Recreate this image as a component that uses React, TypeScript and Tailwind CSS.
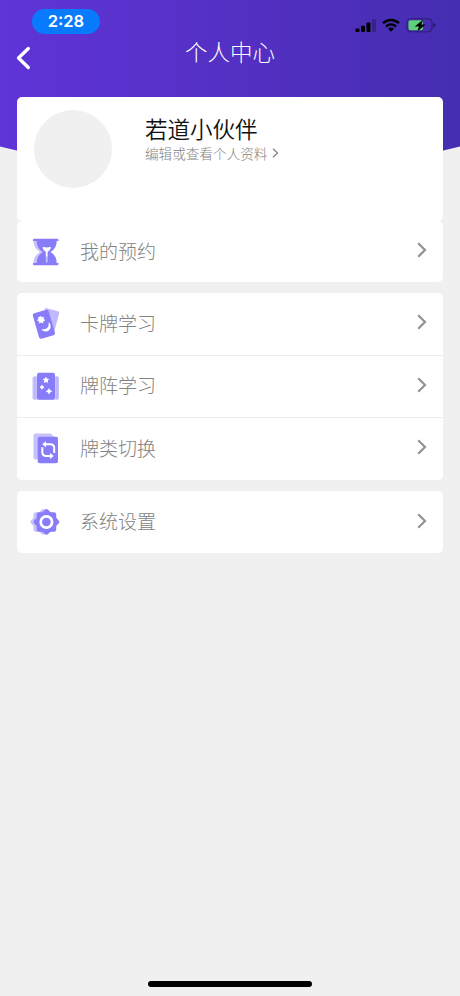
import React from 'react';

interface RowProps {
  icon: React.ReactNode;
  label: string;
}

const Arrow: React.FC = () => (
  <svg className="mb-[2px] h-[16px] w-[10px]" viewBox="0 0 10 16" fill="none" stroke="#929292" strokeWidth="2.2">
    <path d="M1.200 1.200 8 8l-6.800 6.800" />
  </svg>
);

const Row: React.FC<RowProps> = ({ icon, label }) => (
  <div className="flex h-full items-center pr-[16px] pb-px pl-[12px]">
    <div className="h-[34px] w-[34px] shrink-0">{icon}</div>
    <span className="mb-px ml-[17px] flex-1 text-[19px] leading-[28px] font-light text-[#828282]">{label}</span>
    <Arrow />
  </div>
);

const HourglassIcon = () => (
  <svg className="h-full w-full" viewBox="0 0 34 34">
    <path d="M4.500 6.500h12v23h-12c0-5.500 2-8.500 6.500-11.500-4.500-3-6.500-6-6.500-11.500z" fill="#c9c4fc" />
    <path d="M5 4.700h23.500a1 1 0 0 1 1 1V7h-1.800c0 5.200-2.300 8.500-6.200 11 3.900 2.500 6.200 5.800 6.200 11h1.800v1.300a1 1 0 0 1-1 1H5a1 1 0 0 1-1-1V29h3.700c0-5.200 2.300-8.500 6.200-11C10 15.500 7.700 12.200 7.700 7H4V5.700a1 1 0 0 1 1-1z" fill="#897cf8" />
    <path d="M13.500 13.200c1.300-.7 2.700.3 4.200.3s2.900-1 4.200-.3c-.3 2.300-1.700 3.500-3.300 4.500v5.300h-1.800v-5.300c-1.600-1-3-2.200-3.300-4.500z" fill="#fff" />
    <path d="M17.700 22v6.500" stroke="#c9c4fc" strokeWidth="1.700" />
  </svg>
);

const CardsIcon = () => (
  <svg className="h-full w-full" viewBox="0 0 34 34">
    <rect x="13" y="3.500" width="15" height="22" rx="1.5" transform="rotate(15 21 14.500)" fill="#c0bafc" />
    <rect x="6.700" y="5" width="16.500" height="26.500" rx="2" transform="rotate(-16 15 18.500)" fill="#897cf8" />
    <path d="m11.700 10 1.200 1.500 1.900-.3-.3 1.900 1.500 1.200-1.800.8-.3 2-1.700-.8-1.800.9-.3-2-1.800-1 1.400-1.300-.3-1.900 1.900.3z" fill="#fff" stroke="#fff" strokeWidth=".5" />
    <path d="M19.500 16c4 3.200 2.200 9.500-2.700 9.500-2 0-3.500-1-4.200-2.300 4.900 1 8-2.500 6.900-7.200z" fill="#fff" />
  </svg>
);

const SpreadIcon = () => (
  <svg className="h-full w-full" viewBox="0 0 34 34">
    <rect x="3.500" y="7.500" width="26.500" height="23" rx="1.5" fill="#c7c2fc" />
    <path d="M6 7.500v23M28 7.500v23" stroke="#b4adfb" strokeWidth="1" />
    <rect x="8" y="3.700" width="18" height="27" rx="2" fill="#897cf8" />
    <path d="m17 8.500.9 1.500 1.700.3-1.200 1.300.2 1.700-1.600-.7-1.600.7.2-1.700-1.200-1.300 1.700-.3z" fill="#fff" stroke="#fff" strokeWidth=".9" />
    <path d="m13 16.200.7 1.200 1.300.8-1.300.8-.7 1.200-.7-1.200-1.300-.8 1.300-.8z" fill="#fff" stroke="#fff" strokeWidth=".9" />
    <path d="m20 20.200.7 1.300 1.400.7-1.400.8-.7 1.300-.7-1.300-1.400-.8 1.400-.7z" fill="#fff" stroke="#fff" strokeWidth="1.200" />
  </svg>
);

const SwitchIcon = () => (
  <svg className="h-full w-full" viewBox="0 0 34 34">
    <path d="M6.200 2.500h15.500l3 3v23H6.200a1.800 1.800 0 0 1-1.700-2v-22a1.800 1.800 0 0 1 1.700-2z" fill="#c7c2fc" />
    <rect x="8.700" y="5.700" width="20.300" height="26.500" rx="2" fill="#897cf8" />
    <g fill="none" stroke="#fff" strokeWidth="2">
      <path d="M15.500 13.300h5.700c2.300 0 4 1.500 4 3.700v5" />
      <path d="M22.500 25h-5.200c-2.500 0-4-1.500-4-3.700v-5" />
    </g>
    <path d="m17 10.300-3.800 3 3.800 3zM21 22v6l3.800-3z" fill="#fff" />
  </svg>
);

const GearIcon = () => (
  <svg className="h-full w-full" viewBox="0 0 34 34">
    <g fill="#c7c2fc">
      <rect x="4.500" y="7.200" width="19.500" height="19.500" rx="2.300" />
      <rect x="4.500" y="7.200" width="19.500" height="19.500" rx="2.300" transform="rotate(45 14.250 16.950)" />
    </g>
    <g fill="#897cf8">
      <rect x="7.700" y="7.200" width="19.500" height="19.500" rx="2.300" />
      <rect x="7.700" y="7.200" width="19.500" height="19.500" rx="2.300" transform="rotate(45 17.450 16.950)" />
    </g>
    <circle cx="17.400" cy="17" r="5.700" fill="none" stroke="#fff" strokeWidth="2.700" />
  </svg>
);

const StatusIcons = () => (
  <svg className="h-[16px] w-[82px]" viewBox="0 0 82 16">
    <rect x="1.500" y="10.500" width="4" height="3.500" rx="1" />
    <rect x="7" y="7.800" width="4" height="6.200" rx="1" />
    <rect x="12.500" y="4.500" width="4" height="9.500" rx="1" />
    <rect x="18" y="1" width="4" height="13" rx="1" opacity=".25" />
    <g fill="none" stroke="#000" strokeWidth="2.500">
      <path d="M29 5.200c4.700-4.300 11.300-4.300 16 0" />
      <path d="M32 8.500c3-2.700 7-2.700 10 0" />
    </g>
    <path d="M34 10.700c1.800-1.500 4.200-1.500 6 0l-3 3.100z" />
    <rect x="53" y=".8" width="25" height="13" rx="3.500" fill="none" stroke="#000" opacity=".4" />
    <rect x="54.500" y="2.300" width="14.500" height="10" rx="2" fill="#5fd07a" />
    <path d="M79.200 5v4.600c1.500-.6 2.200-1.300 2.200-2.300s-.7-1.700-2.200-2.300z" opacity=".4" />
    <path d="m69 1.700-8.300 6.800h4.200l-1.500 5 8-7h-4z" />
  </svg>
);

const studyRows: RowProps[] = [
  { icon: <CardsIcon />, label: '卡牌学习' },
  { icon: <SpreadIcon />, label: '牌阵学习' },
  { icon: <SwitchIcon />, label: '牌类切换' },
];

export default function App() {
  return (
    <div className="relative flex h-[996px] w-[460px] flex-col overflow-hidden bg-[#f0f0f0] font-['Noto_Sans_CJK_SC',sans-serif]">
      {/* Curved header backdrop, lies under the profile card */}
      <div className="absolute inset-x-0 top-0 h-[172px] overflow-hidden">
        <div className="absolute -left-[115px] bottom-0 h-[400px] w-[690px] rounded-b-[50%_100px] bg-linear-to-r from-[#6034d8] from-[16%] via-[#5430c4] via-[50%] to-[#452db0] to-[84%]" />
      </div>

      <header className="relative h-[97px]">
        <div className="flex h-[34px] items-end justify-between pr-[24px] pl-[32px]">
          <div className="h-[25px] w-[68px] rounded-full bg-[#087bfc] text-center font-['Inter',sans-serif] text-[16.5px] leading-[25px] font-semibold text-white">
            2:28
          </div>
          <StatusIcons />
        </div>
        <div className="grid h-[34px] grid-cols-[60px_1fr_60px] items-center">
          <svg className="mt-[12px] ml-[16px] h-[24px] w-[15px]" viewBox="0 0 15 24" fill="none" stroke="#fff" strokeWidth="3.300" strokeLinecap="round" strokeLinejoin="round">
            <path d="M12.300 2.500 2.500 12l9.800 9.500" />
          </svg>
          <h1 className="mb-px text-center text-[22.5px] leading-[31px] font-light text-white">个人中心</h1>
        </div>
      </header>

      <main className="relative flex flex-col px-[17px]">
        <section className="flex h-[124px] rounded-[5px] bg-white pt-[13px] pl-[17px]">
          <div className="h-[78px] w-[78px] rounded-full bg-[#f0f0f0]" />
          <div className="ml-[33px] pt-[2px]">
            <h2 className="text-[22.5px] leading-[32px] font-[350] text-[#111]">若道小伙伴</h2>
            <p className="flex items-center text-[13.6px] leading-[18px] font-light text-[#828282]">
              编辑或查看个人资料
              <svg className="ml-[5px] h-[10px] w-[7px]" viewBox="0 0 7 10" fill="none" stroke="#858585" strokeWidth="1.300">
                <path d="m1 .8 4.500 4.200L1 9.200" />
              </svg>
            </p>
          </div>
        </section>

        <section className="h-[61px] rounded-[5px] bg-white">
          <Row icon={<HourglassIcon />} label="我的预约" />
        </section>

        <section className="mt-[11px] rounded-[5px] bg-white">
          {studyRows.map((row, i) => (
            <div key={row.label} className={i > 0 ? 'h-[62.500px] border-t border-[#ededed]' : 'h-[61.500px]'}>
              <Row {...row} />
            </div>
          ))}
        </section>

        <section className="mt-[11.500px] h-[62px] rounded-[5px] bg-white">
          <Row icon={<GearIcon />} label="系统设置" />
        </section>
      </main>

      <div className="relative mx-auto mt-auto mb-[9px] h-[6px] w-[164px] rounded-full bg-black" />
    </div>
  );
}
